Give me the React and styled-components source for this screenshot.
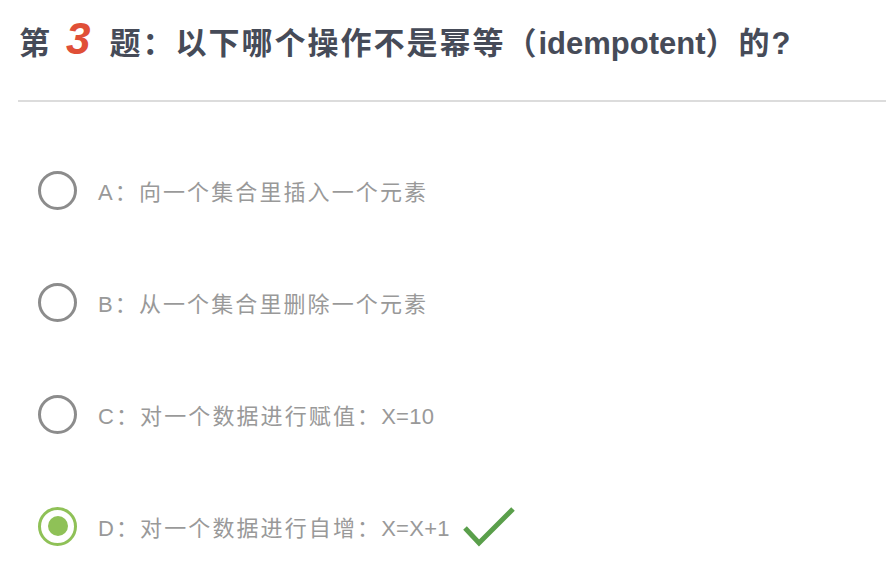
import React from "react";
import styled, { createGlobalStyle } from "styled-components";

const GlobalStyle = createGlobalStyle`
    html, body {
        margin: 0;
        padding: 0;
        background: #ffffff;
    }
    body {
        font-family: "Liberation Sans", "Noto Sans CJK SC", sans-serif;
    }
`;

const options = [
    { key: "A", text: "向一个集合里插入一个元素" },
    { key: "B", text: "从一个集合里删除一个元素" },
    { key: "C", text: "对一个数据进行赋值：", code: "X=10" },
    {
        key: "D",
        text: "对一个数据进行自增：",
        code: "X=X+1",
        selected: true,
        correct: true,
    },
];

const PageStyled = styled.div`
    width: 886px;
    height: 580px;
    overflow: hidden;
    padding-left: 18px;
    box-sizing: border-box;
`;

const TitleStyled = styled.h2`
    margin: 0;
    height: 102px;
    box-sizing: border-box;
    padding: 14px 0 0 1px;
    display: flex;
    align-items: baseline;
    font-family: "Liberation Sans", "Noto Sans CJK SC", sans-serif;
    font-size: 31px;
    font-weight: 700;
    color: #464b58;
    border-bottom: 2px solid #dcdcdc;
    white-space: nowrap;
`;

const CjkStyled = styled.span`
    letter-spacing: 2px;
`;

const LatinStyled = styled.span`
    font-size: 31px;
`;

const NumberStyled = styled.span`
    font-size: 44px;
    font-style: italic;
    font-weight: 700;
    color: #e04f37;
    margin: 0 19px 0 14px;
`;

const ListStyled = styled.ul`
    list-style: none;
    margin: 0;
    padding: 32px 0 0 20px;
`;

const OptionStyled = styled.li`
    height: 112px;
    display: flex;
    align-items: center;
    gap: 21px;
    cursor: pointer;
`;

const RadioStyled = styled.span`
    width: 39px;
    height: 39px;
    box-sizing: border-box;
    border-radius: 50%;
    border: 3px solid ${(p) => (p.$checked ? "#8fc157" : "#8c8c8c")};
    display: flex;
    align-items: center;
    justify-content: center;
    flex-shrink: 0;

    &::after {
        content: "";
        display: ${(p) => (p.$checked ? "block" : "none")};
        width: 20px;
        height: 20px;
        border-radius: 50%;
        background: #8fc157;
    }
`;

const LabelStyled = styled.span`
    font-size: 22px;
    color: #999999;
    letter-spacing: 2.1px;
    white-space: nowrap;
`;

const CodeStyled = styled.span`
    letter-spacing: 0.3px;
`;

const CheckStyled = styled.svg`
    width: 54px;
    height: 42px;
    margin-left: -9px;
    margin-top: 2px;
`;

const CheckMark = () => (
    <CheckStyled viewBox="0 0 54 42">
        <polyline
            points="3,22 17,37 51,3"
            fill="none"
            stroke="#5a9f4b"
            strokeWidth="5"
        />
    </CheckStyled>
);

const App = () => {
    return (
        <PageStyled>
            <GlobalStyle />
            <TitleStyled>
                <CjkStyled>第</CjkStyled>
                <NumberStyled>3</NumberStyled>
                <CjkStyled>题：以下哪个操作不是幂等（</CjkStyled>
                <LatinStyled>idempotent</LatinStyled>
                <CjkStyled>）的?</CjkStyled>
            </TitleStyled>
            <ListStyled>
                {options.map((o) => (
                    <OptionStyled key={o.key}>
                        <RadioStyled $checked={o.selected} />
                        <LabelStyled>
                            {o.key}：{o.text}
                            {o.code && <CodeStyled>{o.code}</CodeStyled>}
                        </LabelStyled>
                        {o.correct && <CheckMark />}
                    </OptionStyled>
                ))}
            </ListStyled>
        </PageStyled>
    );
};

export default App;
